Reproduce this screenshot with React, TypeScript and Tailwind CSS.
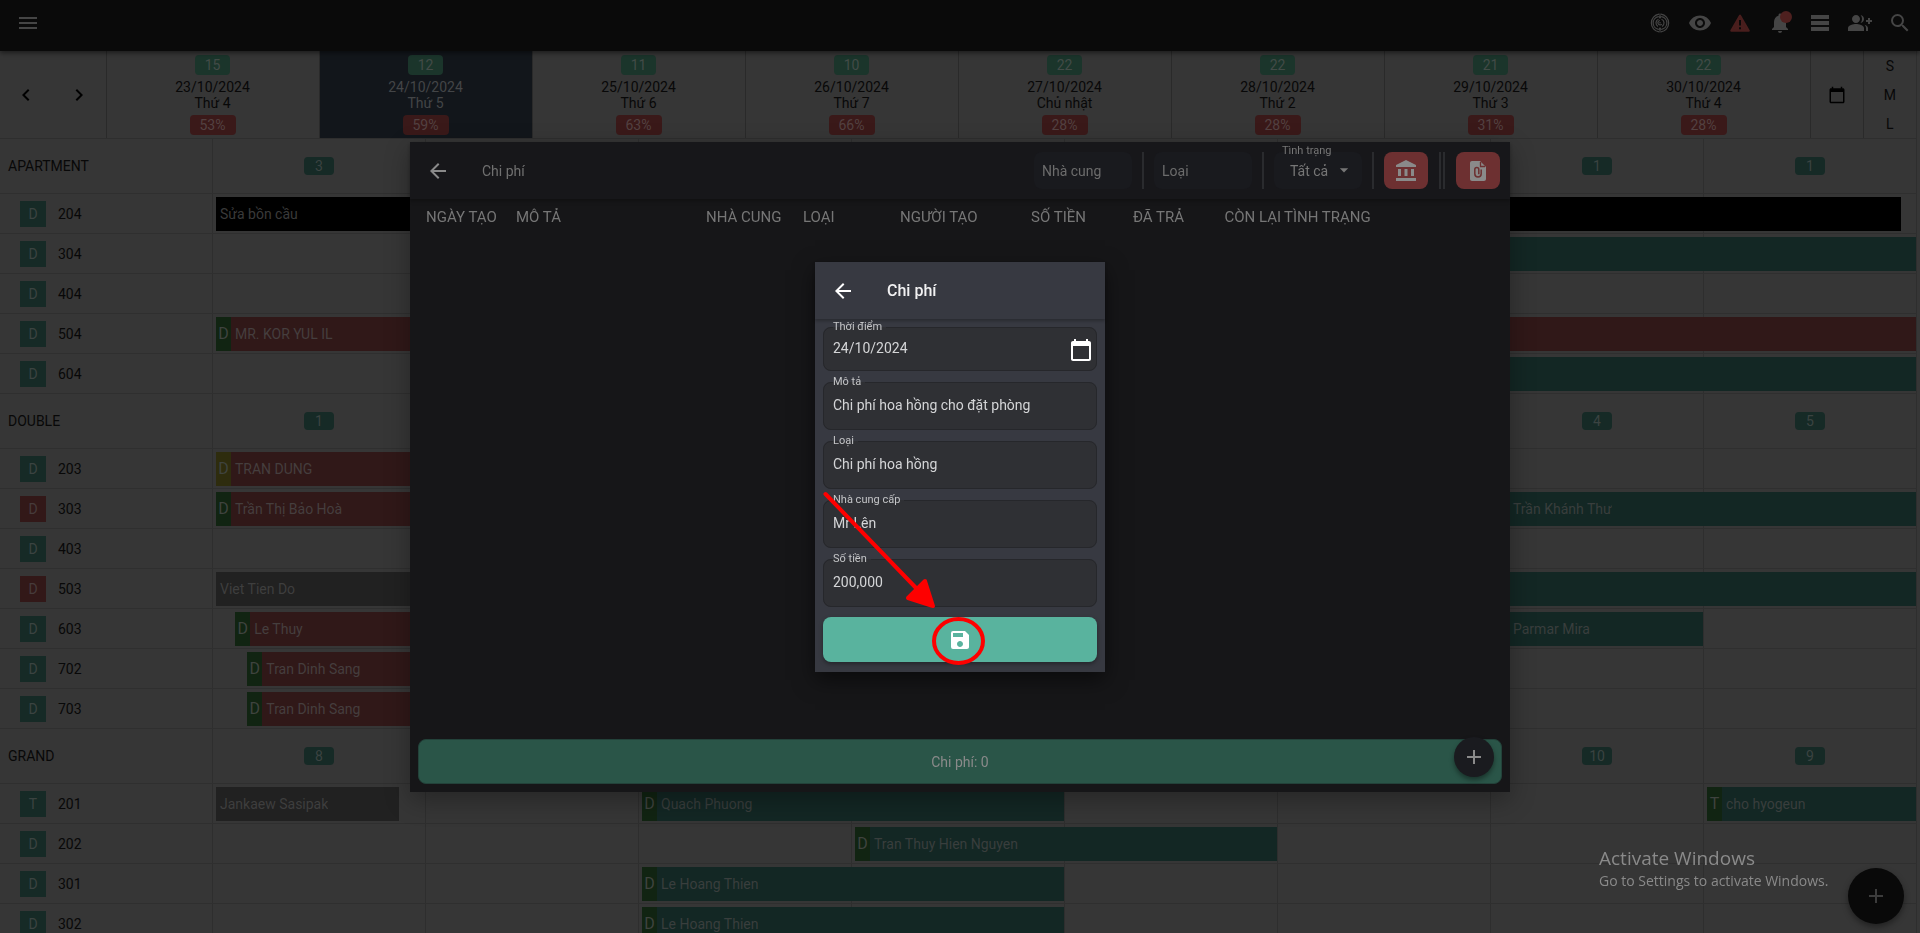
import { useState } from 'react';
import type { ReactNode } from 'react';
import clsx from 'clsx';
import {
  MdAccountBalance,
  MdAdd,
  MdArrowBack,
  MdArrowDropDown,
  MdChevronLeft,
  MdChevronRight,
  MdGroupAdd,
  MdMenu,
  MdNotifications,
  MdSave,
  MdSearch,
  MdVisibility,
} from 'react-icons/md';

type Tone = 'red' | 'teal' | 'gray' | 'black';

interface Booking {
  name?: string;
  // position on the timeline, in days from the first visible date
  from: number;
  to: number;
  tone: Tone;
  tag?: string;
  tagTone?: 'green' | 'olive';
}

interface Room {
  no: string;
  mark?: string;
  dirty?: boolean;
  bookings?: Booking[];
}

interface Group {
  name: string;
  // free rooms by day index
  free: Record<number, number>;
  rooms: Room[];
}

const DAYS = [
  { free: 15, date: '23/10/2024', label: 'Thứ 4', rate: '53%' },
  { free: 12, date: '24/10/2024', label: 'Thứ 5', rate: '59%', active: true },
  { free: 11, date: '25/10/2024', label: 'Thứ 6', rate: '63%' },
  { free: 10, date: '26/10/2024', label: 'Thứ 7', rate: '66%' },
  { free: 22, date: '27/10/2024', label: 'Chủ nhật', rate: '28%' },
  { free: 22, date: '28/10/2024', label: 'Thứ 2', rate: '28%' },
  { free: 21, date: '29/10/2024', label: 'Thứ 3', rate: '31%' },
  { free: 22, date: '30/10/2024', label: 'Thứ 4', rate: '28%' },
];

const GROUPS: Group[] = [
  {
    name: 'APARTMENT',
    free: { 0: 3, 6: 1, 7: 1 },
    rooms: [
      { no: '204', bookings: [{ name: 'Sửa bồn cầu', from: 0, to: 7.93, tone: 'black' }] },
      { no: '304', bookings: [{ from: 4, to: 8, tone: 'teal' }] },
      { no: '404' },
      {
        no: '504',
        bookings: [{ name: 'MR. KOR YUL IL', from: 0, to: 8, tone: 'red', tag: 'D' }],
      },
      { no: '604', bookings: [{ from: 4, to: 8, tone: 'teal' }] },
    ],
  },
  {
    name: 'DOUBLE',
    free: { 0: 1, 6: 4, 7: 5 },
    rooms: [
      {
        no: '203',
        bookings: [{ name: 'TRAN DUNG', from: 0, to: 2, tone: 'red', tag: 'D', tagTone: 'olive' }],
      },
      {
        no: '303',
        dirty: true,
        bookings: [
          { name: 'Trần Thị Bảo Hoà', from: 0, to: 2, tone: 'red', tag: 'D' },
          { name: 'Trần Khánh Thư', from: 6, to: 8, tone: 'teal', tag: 'D' },
        ],
      },
      { no: '403' },
      {
        no: '503',
        dirty: true,
        bookings: [
          { name: 'Viet Tien Do', from: 0, to: 1, tone: 'gray' },
          { from: 4, to: 8, tone: 'teal' },
        ],
      },
      {
        no: '603',
        bookings: [
          { name: 'Le Thuy', from: 0.09, to: 2, tone: 'red', tag: 'D' },
          { name: 'Parmar Mira', from: 6, to: 7, tone: 'teal', tag: 'D' },
        ],
      },
      { no: '702', bookings: [{ name: 'Tran Dinh Sang', from: 0.147, to: 2, tone: 'red', tag: 'D' }] },
      { no: '703', bookings: [{ name: 'Tran Dinh Sang', from: 0.147, to: 2, tone: 'red', tag: 'D' }] },
    ],
  },
  {
    name: 'GRAND',
    free: { 0: 8, 6: 10, 7: 9 },
    rooms: [
      {
        no: '201',
        mark: 'T',
        bookings: [
          { name: 'Jankaew Sasipak', from: 0, to: 0.878, tone: 'gray' },
          { name: 'Quach Phuong', from: 2, to: 4, tone: 'teal', tag: 'D' },
          { name: 'cho hyogeun', from: 7, to: 8, tone: 'teal', tag: 'T' },
        ],
      },
      {
        no: '202',
        bookings: [{ name: 'Tran Thuy Hien Nguyen', from: 3, to: 5, tone: 'teal', tag: 'D' }],
      },
      { no: '301', bookings: [{ name: 'Le Hoang Thien', from: 2, to: 4, tone: 'teal', tag: 'D' }] },
      { no: '302', bookings: [{ name: 'Le Hoang Thien', from: 2, to: 4, tone: 'teal', tag: 'D' }] },
    ],
  },
];

const toneClass: Record<Tone, string> = {
  red: 'bg-[#301818] text-[#453e3e]',
  teal: 'bg-[#132724] text-[#393e3d]',
  gray: 'bg-[#212121] text-[#3e3e3e]',
  black: 'bg-black text-[#3a3a3a]',
};

const CalendarIcon = ({ className }: { className: string }) => (
  <svg viewBox="0 0 24 24" fill="currentColor" className={className}>
    <path d="M20 3h-1V1h-2v2H7V1H5v2H4c-1.1 0-2 .9-2 2v16c0 1.1.9 2 2 2h16c1.1 0 2-.9 2-2V5c0-1.1-.9-2-2-2zm0 18H4V8h16v13z" />
  </svg>
);

const RadarIcon = () => (
  <svg viewBox="0 0 24 24" fill="none" stroke="currentColor" strokeWidth="1.2" className="size-6">
    <path d="M11 3.1a9 9 0 0 0 0 17.8M13 3.1a9 9 0 0 1 0 17.8" />
    <path d="M10.5 5.6a6.5 6.5 0 0 0 0 12.8M13.5 5.6a6.5 6.5 0 0 1 0 12.8" />
    <path d="M10.5 8.2a4 4 0 0 0-.5 7.2M13.5 8.2a4 4 0 0 1 .5 7.2" />
    <path d="M12 2.5V7M12 17v4.5M12 9.5a2.2 2.2 0 1 0 1.8 3.6M12 11v1.5" />
    <path d="m10.6 5 1.4 2 1.4-2M10.6 19l1.4-2 1.4 2" />
  </svg>
);

const WarningIcon = () => (
  <svg viewBox="0 0 24 24" className="size-6">
    <path d="M12 4.5 3.2 19.7h17.6z" fill="currentColor" stroke="currentColor" strokeWidth="2" strokeLinejoin="round" />
    <path d="M12 9v5.5M12 16.3v2" stroke="#0a0a0a" strokeWidth="2" />
  </svg>
);

const RowsIcon = () => (
  <svg viewBox="0 0 24 24" fill="currentColor" className="size-6">
    <path d="M21 8H3V4h18v4zm0 2H3v4h18v-4zm0 6H3v4h18v-4z" />
  </svg>
);

const InvoiceIcon = () => (
  <svg viewBox="0 0 24 24" className="size-6">
    <path d="M14 2H6c-1.1 0-2 .9-2 2v16c0 1.1.9 2 2 2h12c1.1 0 2-.9 2-2V8z" fill="currentColor" />
    <path d="M14.5 3v4.5H19" fill="none" stroke="#6d3031" strokeWidth="1.3" />
    <path
      d="M8.8 10v4.8a3.2 3.2 0 0 0 6.4 0v-4.3M8.8 10.500a2 2 0 0 1 4 0v4.7"
      fill="none"
      stroke="#6d3031"
      strokeWidth="1.5"
    />
  </svg>
);

const BarButton = ({ label, children }: { label: string; children: ReactNode }) => (
  <button type="button" aria-label={label} className="relative flex h-full w-10 items-center justify-center">
    {children}
  </button>
);

const TopBar = () => (
  <header className="relative z-10 flex h-[51px] items-center justify-between bg-[#0a0a0a] pb-[5px] pl-2 text-[#454545] shadow-[0_2px_5px_rgba(0,0,0,0.5)]">
    <BarButton label="Menu">
      <MdMenu className="size-6" />
    </BarButton>
    <nav className="flex h-full">
      <BarButton label="Radar">
        <RadarIcon />
      </BarButton>
      <BarButton label="Hiển thị">
        <MdVisibility className="size-6" />
      </BarButton>
      <BarButton label="Cảnh báo">
        <span className="text-[#491e1d]">
          <WarningIcon />
        </span>
      </BarButton>
      <BarButton label="Thông báo">
        <MdNotifications className="size-6" />
        <span className="absolute top-[11px] left-5 size-3 rounded-full bg-[#4e201f]" />
      </BarButton>
      <BarButton label="Danh sách">
        <RowsIcon />
      </BarButton>
      <BarButton label="Thêm khách">
        <MdGroupAdd className="size-6" />
      </BarButton>
      <BarButton label="Tìm kiếm">
        <MdSearch className="size-6" />
      </BarButton>
    </nav>
  </header>
);

const DayHeader = () => (
  <div className="grid h-[88px] grid-cols-[2fr_repeat(8,4fr)_1fr_1fr] border-b border-[#2e2e2e]">
    <div className="grid grid-cols-2 border-r border-[#2a2a2a] text-black">
      <button type="button" aria-label="Trước" className="flex items-center justify-center">
        <MdChevronLeft className="size-6" />
      </button>
      <button type="button" aria-label="Sau" className="flex items-center justify-center">
        <MdChevronRight className="size-6" />
      </button>
    </div>
    {DAYS.map((day) => (
      <div
        key={day.date}
        className={clsx(
          'flex flex-col items-center gap-1 border-r border-[#2a2a2a] pt-1 leading-4',
          day.active ? 'bg-[#12161b] text-[#434547]' : 'text-[#080808]'
        )}
      >
        <span className="h-5 rounded bg-[#1b352b] px-[10px] leading-5 text-[#424b47]">{day.free}</span>
        <div className="text-center">
          <div>{day.date}</div>
          <div>{day.label}</div>
        </div>
        <span className="h-5 rounded bg-[#3a1919] px-[10px] leading-5 text-[#534141]">{day.rate}</span>
      </div>
    ))}
    <button
      type="button"
      aria-label="Chọn ngày"
      className="flex items-center justify-center border-r border-[#2a2a2a] text-black"
    >
      <CalendarIcon className="size-[18px]" />
    </button>
    <div className="grid grid-rows-3 border-r border-[#2e2e2e] text-[#080808]">
      <button type="button">S</button>
      <button type="button">M</button>
      <button type="button">L</button>
    </div>
  </div>
);

const BookingBar = ({ booking }: { booking: Booking }) => (
  <div
    className={clsx('absolute top-[3px] flex h-[34px] items-center', toneClass[booking.tone])}
    style={{
      left: `calc(${(booking.from / 8) * 100}% + 3px)`,
      right: `calc(${((8 - booking.to) / 8) * 100}% + 1px)`,
    }}
  >
    {booking.tag && (
      <span
        className={clsx(
          'flex h-full w-[15px] items-center justify-center text-base text-[#3f433f]',
          booking.tagTone === 'olive' ? 'bg-[#2e2c0e]' : 'bg-[#112412]'
        )}
      >
        {booking.tag}
      </span>
    )}
    <span className="truncate pl-1">{booking.name}</span>
  </div>
);

const GroupRows = ({ group }: { group: Group }) => (
  <section>
    <div className="grid h-[55px] grid-cols-9 border-b border-[#2f2f2f]">
      <h2 className="flex items-center border-r border-[#2e2e2e] pl-2 text-[#080808]">{group.name}</h2>
      {DAYS.map((day, i) => (
        <div key={day.date} className="flex items-center justify-center border-r border-[#2e2e2e]">
          {group.free[i] !== undefined && (
            <span className="h-[18px] w-[30px] rounded bg-[#162a26] text-center leading-[18px] text-[#3b4341]">
              {group.free[i]}
            </span>
          )}
        </div>
      ))}
    </div>
    {group.rooms.map((room) => (
      <div key={room.no} className="grid h-10 grid-cols-9 border-b border-[#2f2f2f]">
        <div className="flex items-center gap-3 border-r border-[#2e2e2e] pl-5 text-[#080808]">
          <span
            className={clsx(
              'flex size-[26px] items-center justify-center',
              room.dirty ? 'bg-[#321818] text-[#463b3b]' : 'bg-[#162a26] text-[#3b4341]'
            )}
          >
            {room.mark ?? 'D'}
          </span>
          {room.no}
        </div>
        <div className="relative col-span-8 grid grid-cols-8">
          {DAYS.map((day) => (
            <div key={day.date} className="border-r border-[#2e2e2e]" />
          ))}
          {room.bookings?.map((booking) => (
            <BookingBar key={booking.from} booking={booking} />
          ))}
        </div>
      </div>
    ))}
  </section>
);

const Divider = () => <span className="h-[37px] w-0.5 bg-[#2a2b2e]" />;

const ExpenseList = () => {
  const [status, setStatus] = useState('all');

  return (
    <div className="relative flex h-[650px] w-[1100px] flex-col bg-[#161618] text-[#767676] shadow-[0_8px_24px_rgba(0,0,0,0.3)]">
      <div className="flex h-[57px] shrink-0 items-center bg-[#17171a] pr-[10px] pl-4 shadow-[0_2px_4px_rgba(0,0,0,0.3)]">
        <button type="button" aria-label="Quay lại" className="text-[#8a8a8a]">
          <MdArrowBack className="size-6" />
        </button>
        <h2 className="ml-8 flex-1 text-[#707070]">Chi phí</h2>
        <div className="flex items-center gap-[10px]">
          <input
            type="text"
            aria-label="Nhà cung cấp"
            placeholder="Nhà cung"
            className="h-[37px] w-[98px] rounded-lg bg-[#191a1e] px-2 outline-none placeholder:text-[#6c6c6c]"
          />
          <Divider />
          <input
            type="text"
            aria-label="Loại"
            placeholder="Loại"
            className="h-[37px] w-[98px] rounded-lg bg-[#191a1e] px-2 outline-none placeholder:text-[#6c6c6c]"
          />
          <Divider />
          <div className="relative">
            <label htmlFor="status" className="absolute -top-2 left-2 text-[11px] leading-[14px]">
              Tình trạng
            </label>
            <select
              id="status"
              value={status}
              onChange={(e) => setStatus(e.target.value)}
              className="h-[37px] w-[88px] appearance-none rounded-lg bg-[#191a1e] pl-4 outline-none"
            >
              <option value="all">Tất cả</option>
            </select>
            <MdArrowDropDown className="pointer-events-none absolute top-2 right-2 size-5" />
          </div>
          <Divider />
          <button
            type="button"
            aria-label="Ngân hàng"
            className="flex h-[37px] w-11 items-center justify-center rounded-lg bg-[#6d3031] text-[#8a8a8a]"
          >
            <MdAccountBalance className="size-6" />
          </button>
          <div className="flex gap-0.5 px-px">
            <Divider />
            <Divider />
          </div>
          <button
            type="button"
            aria-label="Xuất tệp"
            className="flex h-[37px] w-11 items-center justify-center rounded-lg bg-[#6d3031] text-[#8a8a8a]"
          >
            <InvoiceIcon />
          </button>
        </div>
      </div>

      <div className="flex-1 px-4">
        <table className="w-full table-fixed text-[15px]">
          <thead>
            <tr className="h-[38px] text-left whitespace-nowrap">
              <th className="w-[90px] font-normal">NGÀY TẠO</th>
              <th className="w-[190px] font-normal">MÔ TẢ</th>
              <th className="w-[97px] font-normal">NHÀ CUNG</th>
              <th className="w-[97px] font-normal">LOẠI</th>
              <th className="w-[86px] font-normal">NGƯỜI TẠO</th>
              <th className="w-[100px] text-right font-normal">SỐ TIỀN</th>
              <th className="w-[98px] text-right font-normal">ĐÃ TRẢ</th>
              <th className="w-[97px] text-right font-normal">CÒN LẠI</th>
              <th className="pl-[3px] font-normal">TÌNH TRẠNG</th>
            </tr>
          </thead>
          <tbody />
        </table>
      </div>

      <button
        type="button"
        className="mx-2 mb-2 h-[45px] rounded-lg border border-[#23423a] bg-[#2a5548] text-[#8a8a8a]"
      >
        Chi phí: 0
      </button>
      <button
        type="button"
        aria-label="Thêm chi phí"
        className="absolute right-4 bottom-[15px] flex size-10 items-center justify-center rounded-full bg-[#1a1b1f] text-[#8a8a8a] shadow-[0_3px_5px_rgba(0,0,0,0.4)]"
      >
        <MdAdd className="size-6" />
      </button>
    </div>
  );
};

interface FieldProps {
  id: string;
  label: string;
  value: string;
  onChange: (value: string) => void;
  inputClass?: string;
  children?: ReactNode;
}

const Field = ({ id, label, value, onChange, inputClass = 'h-8', children }: FieldProps) => (
  <fieldset className="relative rounded-lg border border-[#26272b] bg-[#2f3034] pb-2 pl-[9px]">
    <legend className="pr-1 text-[11px] leading-[14px] text-[#c4c5c7]">
      <label htmlFor={id}>{label}</label>
    </legend>
    <input
      id={id}
      type="text"
      value={value}
      onChange={(e) => onChange(e.target.value)}
      className={clsx('block w-full bg-transparent text-[#d4d5d7] outline-none', inputClass)}
    />
    {children}
  </fieldset>
);

const ExpenseDialog = () => {
  const [form, setForm] = useState({
    date: '24/10/2024',
    note: 'Chi phí hoa hồng cho đặt phòng',
    kind: 'Chi phí hoa hồng',
    supplier: 'Mr Lên',
    amount: '200,000',
  });

  const update = (key: keyof typeof form) => (value: string) => setForm({ ...form, [key]: value });

  return (
    <div
      role="dialog"
      aria-label="Chi phí"
      className="relative flex w-[290px] flex-col bg-[#373941] shadow-[0_8px_20px_rgba(0,0,0,0.5)]"
    >
      <div className="flex h-[57px] items-center pl-4 text-white shadow-[0_2px_3px_rgba(0,0,0,0.25)]">
        <button type="button" aria-label="Đóng">
          <MdArrowBack className="size-6" />
        </button>
        <h2 className="ml-8 text-base font-medium text-[#f1f1f2]">Chi phí</h2>
      </div>

      <form className="flex flex-col gap-1 px-2 pt-px pb-[10px]" onSubmit={(e) => e.preventDefault()}>
        <Field id="date" label="Thời điểm" value={form.date} onChange={update('date')} inputClass="h-7">
          <button type="button" aria-label="Chọn ngày" className="absolute right-[3px] bottom-2 text-white">
            <CalendarIcon className="size-6" />
          </button>
        </Field>
        <Field id="note" label="Mô tả" value={form.note} onChange={update('note')} />
        <Field id="kind" label="Loại" value={form.kind} onChange={update('kind')} />
        <Field id="supplier" label="Nhà cung cấp" value={form.supplier} onChange={update('supplier')} />
        <Field id="amount" label="Số tiền" value={form.amount} onChange={update('amount')} />
        <button
          type="submit"
          aria-label="Lưu"
          className="mt-1.5 flex h-[45px] items-center justify-center rounded-lg bg-[#59b39e] text-white shadow-[0_2px_4px_rgba(0,0,0,0.35)]"
        >
          <MdSave className="size-6" />
        </button>
      </form>

      {/* Hint: arrow and ring around the save button */}
      <svg
        viewBox="0 0 290 410"
        className="pointer-events-none absolute inset-0 size-full"
        stroke="#fe0000"
        strokeWidth="4"
        strokeLinecap="round"
        strokeLinejoin="round"
      >
        <path d="M10.5 232 102 327" />
        <path d="M110 319 118 344 93 336z" fill="#fe0000" />
        <ellipse cx="143.5" cy="379" rx="24.5" ry="22" fill="none" />
      </svg>
    </div>
  );
};

export default function App() {
  return (
    <div className="h-screen overflow-hidden bg-[#363636] font-[Roboto,sans-serif] text-sm">
      <TopBar />
      <main className="mr-[3px]">
        <DayHeader />
        {GROUPS.map((group) => (
          <GroupRows key={group.name} group={group} />
        ))}
      </main>

      <button
        type="button"
        aria-label="Thêm đặt phòng"
        className="fixed right-4 bottom-[9px] flex size-14 items-center justify-center rounded-full bg-[#090909] text-[#3c3c3c] shadow-[0_3px_6px_rgba(0,0,0,0.4)]"
      >
        <MdAdd className="size-6" />
      </button>

      <div className="fixed inset-0 z-20 flex items-center justify-center pt-px">
        <ExpenseList />
      </div>
      <div className="fixed inset-0 z-30 flex items-center justify-center pt-px">
        <ExpenseDialog />
      </div>

      <div className="pointer-events-none fixed right-[85px] bottom-[42px] z-40 w-[236px] font-['Open_Sans',sans-serif] text-[#8a8a8a]">
        <p className="text-[19px] leading-[26px]">Activate Windows</p>
        <p className="text-sm leading-5 whitespace-nowrap">Go to Settings to activate Windows.</p>
      </div>
    </div>
  );
}
